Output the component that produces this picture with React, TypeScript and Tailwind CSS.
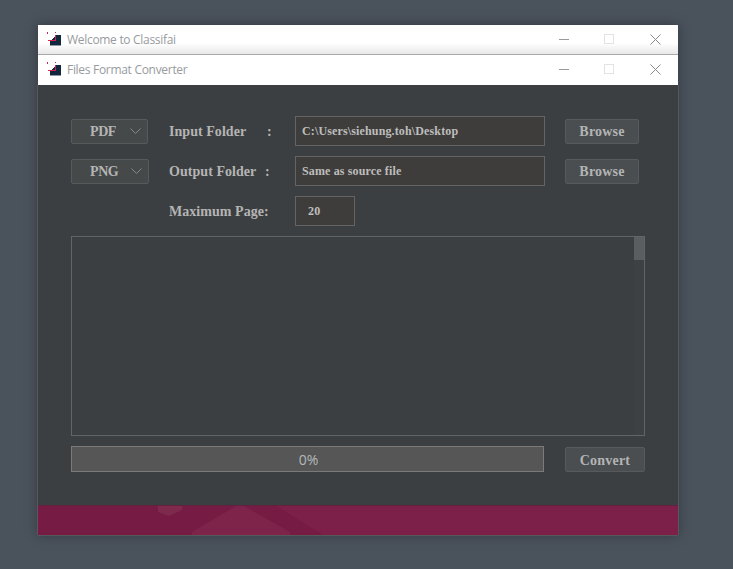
const serif = "font-['Liberation_Serif',serif]";

function AppIcon() {
  return (
    <svg width="16" height="16" viewBox="0 0 16 16" className="shrink-0" shapeRendering="crispEdges">
      <path d="M3 13V9h1V8h1V7h1V6h1V5h1V3h6v10z" fill="#12283f" />
      <rect x="3" y="13" width="11" height="1" fill="#8d98a3" />
      <rect x="8" y="3" width="1" height="6" fill="#d8244f" />
      <rect x="1" y="8" width="8" height="1" fill="#d8244f" />
      <rect x="8" y="0" width="1" height="1" fill="#d8244f" />
      <rect x="0" y="0" width="1" height="2" fill="#d8244f" />
    </svg>
  );
}

function TitleBar({ title, shaded }: { title: string; shaded?: boolean }) {
  return (
    <div
      className={`flex h-[30px] items-center pl-[9px] ${
        shaded
          ? "bg-gradient-to-b from-white from-60% to-[#e6e6e6] shadow-[inset_0_-1px_0_#a8a8a8]"
          : "bg-white"
      }`}
    >
      <AppIcon />
      <span className="ml-[4px] font-['Open_Sans',sans-serif] text-[12px] tracking-[-0.3px] text-[#989b9e]">{title}</span>
      <div className="ml-auto -mt-[1px] flex items-center">
        <svg width="11" height="11" viewBox="0 0 11 11" className="mr-[34px]">
          <rect x="0" y="5" width="10" height="1" fill="#999999" />
        </svg>
        <svg width="11" height="11" viewBox="0 0 11 11" className="mr-[35px]">
          <rect x="0.5" y="0.5" width="9" height="9" fill="none" stroke="#e3e3e3" />
        </svg>
        <svg width="11" height="11" viewBox="0 0 11 11" className="mr-[17px]">
          <path d="M0.5 0.5l10 10M10.5 0.5l-10 10" stroke="#8a8a8a" strokeWidth="1" />
        </svg>
      </div>
    </div>
  );
}

function Select({ label, width }: { label: string; width: string }) {
  return (
    <div className={`flex h-[25px] ${width} items-center rounded-[2px] border border-[#565a5c] bg-[#45494a] pl-[18px] ${serif} text-[14px] font-bold tracking-[-0.4px] text-[#b4b4b4]`}>
      <span>{label}</span>
      <svg width="11" height="6" viewBox="0 0 11 6" className="ml-auto mr-[6px]">
        <path d="M0.5 0.5l5 5 5-5" fill="none" stroke="#85898b" strokeWidth="1" />
      </svg>
    </div>
  );
}

function Field({ value, width }: { value: string; width: string }) {
  return (
    <div className={`flex h-[30px] ${width} items-center border border-[#646464] bg-[#3f3d3b] ${serif} text-[12px] font-bold tracking-[0.14px] text-[#bdbdbd]`}>
      {value}
    </div>
  );
}

function Button({ label, width }: { label: string; width: string }) {
  return (
    <div className={`flex h-[25px] ${width} items-center justify-center rounded-[2px] border border-[#565a5c] bg-[#4a4e50] ${serif} text-[14px] font-bold tracking-[0.2px] text-[#b4b4b4]`}>
      {label}
    </div>
  );
}

export default function App() {
  return (
    <div className="h-[569px] w-[733px] overflow-hidden bg-[#4a525c] pl-[38px] pt-[25px]">
      <div className="w-[640px] shadow-[0_0_10px_rgba(30,34,40,0.55)]">
        <TitleBar title="Welcome to Classifai" shaded />
        <TitleBar title="Files Format Converter" />
        <div className="shadow-[-1px_0_0_#55595b,1px_0_0_#55595b,0_1px_0_#55595b]">
          <div className="h-[420px] bg-[#3c3f41] pl-[33px] pt-[31px]">
            <div className="flex h-[30px] items-center">
              <div className="w-[98px]"><Select label="PDF" width="w-[77px]" /></div>
              <div className={`flex w-[126px] ${serif} text-[14px] font-bold tracking-[0.05px] text-[#b4b4b4]`}>
                <span className="w-[98px]">Input Folder</span>:
              </div>
              <Field value="C:\Users\siehung.toh\Desktop" width="w-[250px] pl-[6px]" />
              <div className="ml-[20px]"><Button label="Browse" width="w-[74px]" /></div>
            </div>
            <div className="mt-[10px] flex h-[30px] items-center">
              <div className="w-[98px]"><Select label="PNG" width="w-[78px]" /></div>
              <div className={`flex w-[126px] ${serif} text-[14px] font-bold tracking-[0.05px] text-[#b4b4b4]`}>
                <span className="w-[96px]">Output Folder</span>:
              </div>
              <Field value="Same as source file" width="w-[250px] pl-[6px]" />
              <div className="ml-[20px]"><Button label="Browse" width="w-[74px]" /></div>
            </div>
            <div className="mt-[10px] flex h-[30px] items-center">
              <div className="w-[98px]" />
              <div className={`w-[126px] ${serif} text-[14px] font-bold tracking-[0.05px] text-[#b4b4b4]`}>Maximum Page:</div>
              <Field value="20" width="w-[60px] pl-[12px]" />
            </div>
            <div className="mt-[10px] flex h-[200px] w-[574px] justify-end border border-[#646464] bg-[#3c3f41]">
              <div className="w-[10px] bg-[#3e4143]">
                <div className="h-[23px] bg-[#5b5e60]" />
              </div>
            </div>
            <div className="mt-[10px] flex items-end">
              <div className="flex h-[26px] w-[473px] items-center justify-center border border-[#7a7a7a] bg-[#565656] pl-[2px] pt-[1px] font-['Open_Sans',sans-serif] text-[14px] text-[#b4b9bd]">
                0%
              </div>
              <div className="ml-[21px]"><Button label="Convert" width="w-[80px] pt-[1px]" /></div>
            </div>
          </div>
          <div className="h-[30px] bg-[#761b44]">
            <svg width="640" height="30" viewBox="0 0 640 30" className="block">
              <path d="M237 0H640V30H285z" fill="#7c2049" />
              <path d="M120 0h24v5l-13 6-11-4z" fill="#7e2a4c" />
              <path d="M154 30v-3L198 1q4-1 8 0L252 27v3z" fill="#7e2349" />
              <rect width="640" height="1" fill="#642040" />
            </svg>
          </div>
        </div>
      </div>
    </div>
  );
}
